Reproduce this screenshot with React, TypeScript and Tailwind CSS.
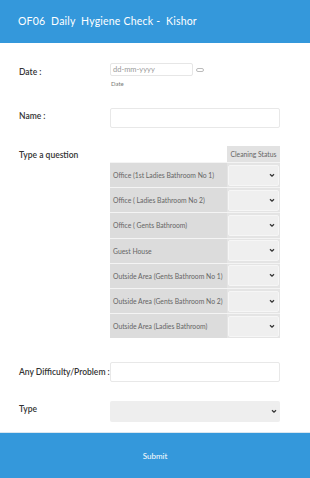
import React from "react";

const rows = [
  "Office (1st Ladies Bathroom No 1)",
  "Office ( Ladies Bathroom No 2)",
  "Office ( Gents Bathroom)",
  "Guest House",
  "Outside Area (Gents Bathroom No 1)",
  "Outside Area (Gents Bathroom No 2)",
  "Outside Area (Ladies Bathroom)",
];

function Chevron() {
  return (
    <svg width="6" height="5" viewBox="0 0 6 5" className="text-[#333]">
      <path d="M1 1.2 L3 3.2 L5 1.2" fill="none" stroke="currentColor" strokeWidth="1.3" />
    </svg>
  );
}

export default function App() {
  return (
    <div className="w-[310px] h-[478px] bg-white flex flex-col text-[#444]" style={{ fontFamily: "Lato, 'Noto Sans', sans-serif" }}>
      <div className="h-[43px] bg-[#3498db] flex items-center pl-[18px] text-white text-[10.5px] font-normal tracking-[0.2px] shrink-0">
        OF06&nbsp; Daily&nbsp; Hygiene Check -&nbsp; Kishor
      </div>
      <div className="flex-1 flex flex-col pl-[19px] pr-[30px]">
        <div className="flex mt-[20px]">
          <div className="w-[91px] text-[8.5px] font-semibold text-[#333] pt-[3px]">Date :</div>
          <div className="flex flex-col">
            <div className="flex items-center gap-[3px]">
              <div className="w-[83px] h-[13px] border border-[#e6e6e6] rounded-[2px] text-[7.5px] text-[#999] pl-[2px] flex items-center">dd-mm-yyyy</div>
              <div className="w-[8px] h-[4px] border border-[#bbb] rounded-full"></div>
            </div>
            <div className="text-[6px] text-[#777] mt-[3px] pl-[1px]">Date</div>
          </div>
        </div>
        <div className="flex mt-[20px]">
          <div className="w-[91px] text-[8.5px] font-semibold text-[#333] pt-[2px]">Name :</div>
          <div className="w-[170px] h-[20px] border border-[#e8e8e8] rounded-[2px]"></div>
        </div>
        <div className="flex mt-[18px]">
          <div className="w-[91px] text-[8.5px] font-semibold text-[#333] pt-[3px]">Type a question</div>
          <div className="flex flex-col w-[170px]">
            <div className="flex justify-end">
              <div className="w-[53px] h-[16px] bg-[#e2e2e2] text-[6.8px] text-[#666] flex items-center justify-center whitespace-nowrap">Cleaning Status</div>
            </div>
            {rows.map((r) => (
              <div key={r} className="flex h-[25.2px] border-t border-[#f4f4f4]">
                <div className="flex-1 bg-[#dcdcdc] text-[6.8px] text-[#666] flex items-center pl-[3px] whitespace-nowrap">{r}</div>
                <div className="w-[53px] bg-[#e4e4e4] flex items-center px-[1px]">
                  <div className="w-full h-[21px] bg-[#efefef] border border-[#f6f6f6] rounded-[2px] flex items-center justify-end pr-[3px]">
                    <Chevron />
                  </div>
                </div>
              </div>
            ))}
          </div>
        </div>
        <div className="flex mt-[24px] items-center">
          <div className="w-[91px] text-[8.5px] font-semibold text-[#333] whitespace-nowrap">Any Difficulty/Problem :</div>
          <div className="w-[170px] h-[20px] border border-[#e8e8e8] rounded-[2px]"></div>
        </div>
        <div className="flex mt-[19px] items-center">
          <div className="w-[91px] text-[8.5px] font-semibold text-[#333] mt-[-4px]">Type</div>
          <div className="w-[170px] h-[21px] bg-[#eeeeee] rounded-[2px] flex items-center justify-end pr-[3px]">
            <Chevron />
          </div>
        </div>
      </div>
      <div className="h-[1px] bg-[#d9e6ef] shrink-0"></div>
      <div className="h-[45px] bg-[#3498db] flex items-center justify-center text-white text-[8px] shrink-0">Submit</div>
    </div>
  );
}
